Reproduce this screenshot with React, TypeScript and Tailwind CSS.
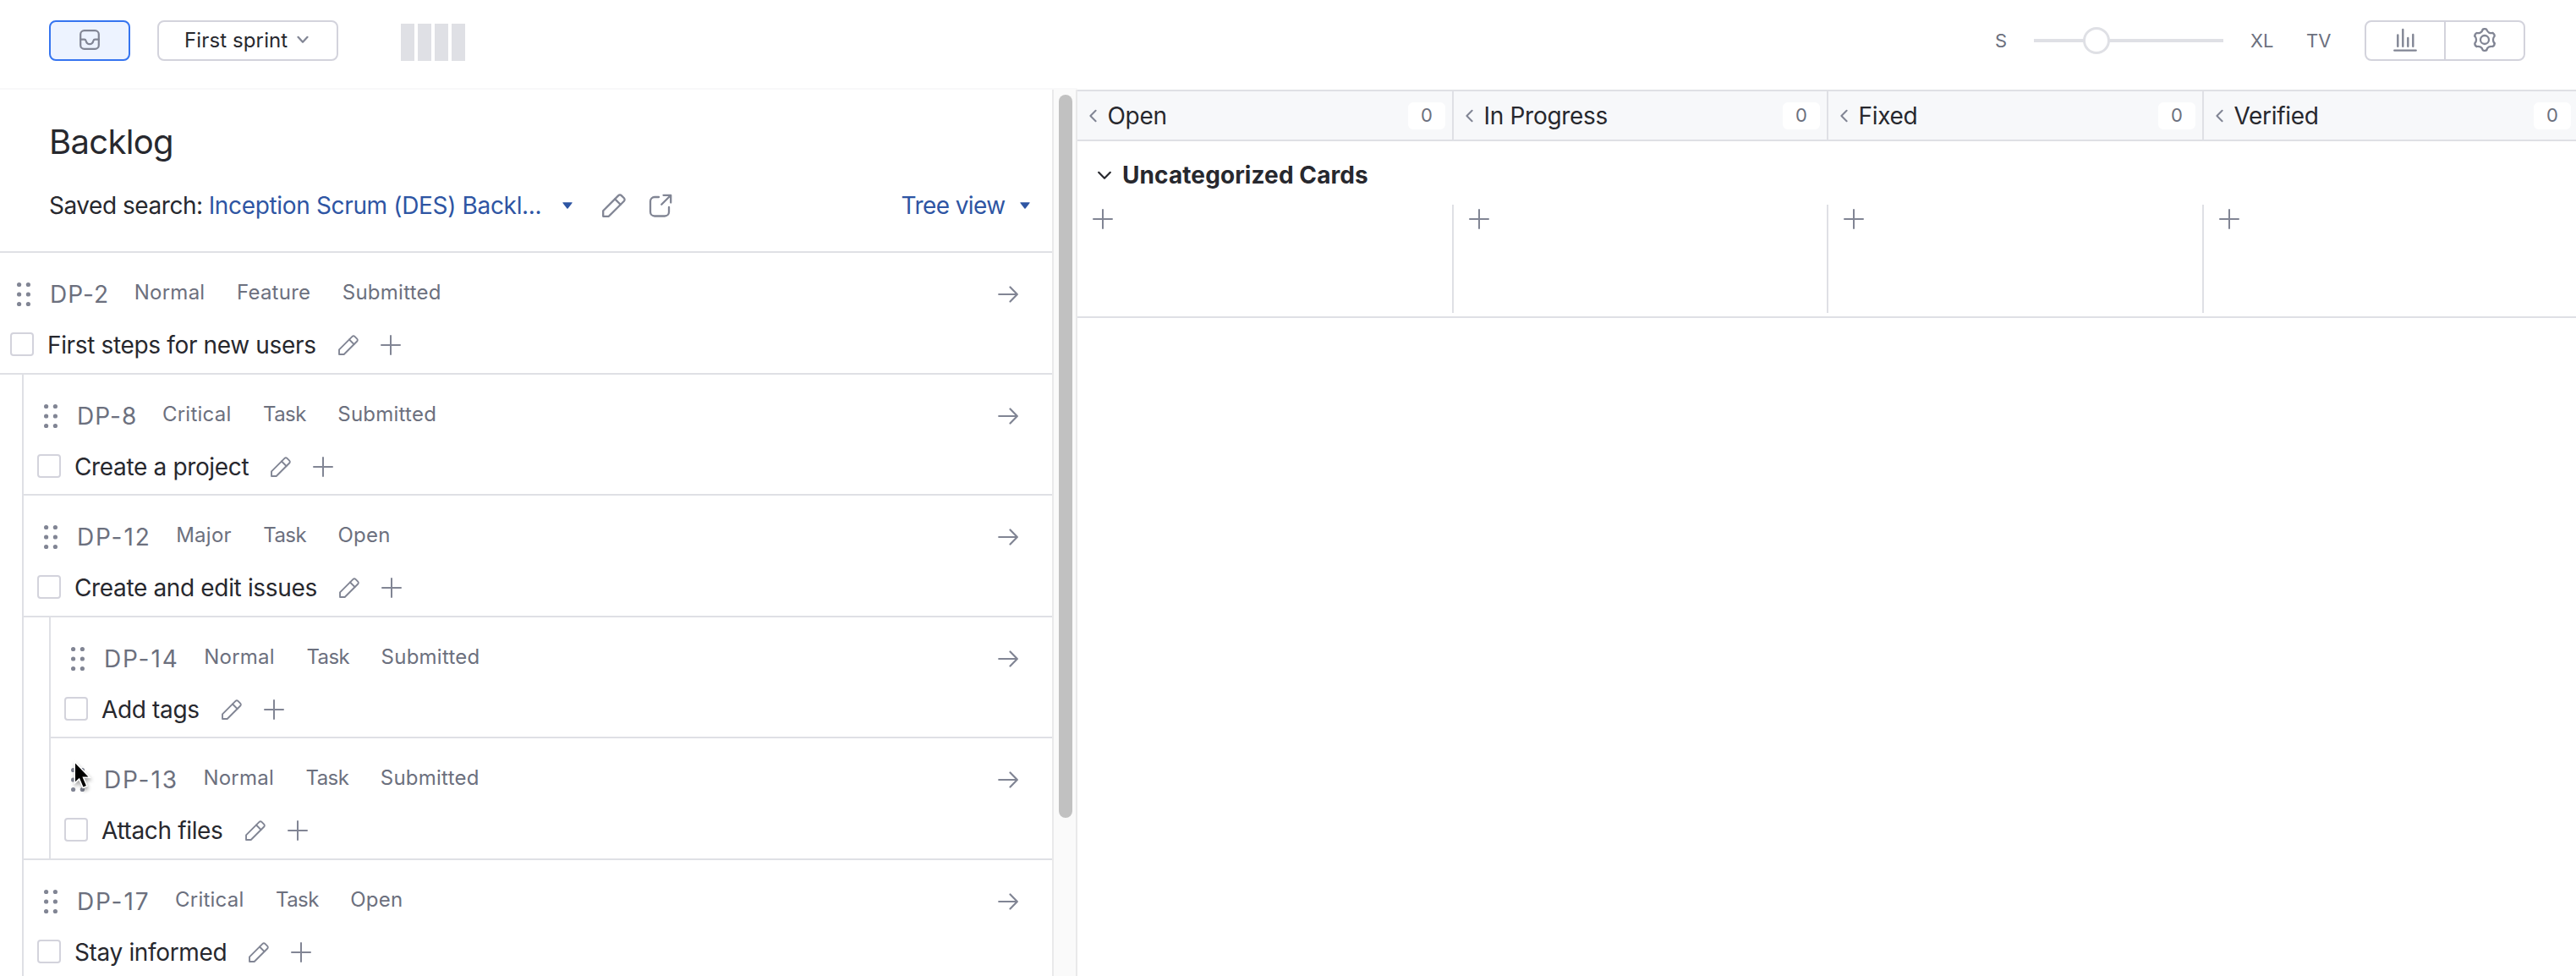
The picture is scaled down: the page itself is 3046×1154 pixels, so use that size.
import type { ReactNode } from "react";

interface Issue {
  id: string;
  fields: string[];
  title: string;
  height: string;
  hovered?: boolean;
  children?: Issue[];
}

const issues: Issue[] = [
  {
    id: "DP-2",
    fields: ["Normal", "Feature", "Submitted"],
    title: "First steps for new users",
    height: "h-[142px]",
    children: [
      {
        id: "DP-8",
        fields: ["Critical", "Task", "Submitted"],
        title: "Create a project",
        height: "h-[141px]",
      },
      {
        id: "DP-12",
        fields: ["Major", "Task", "Open"],
        title: "Create and edit issues",
        height: "h-[142px]",
        children: [
          {
            id: "DP-14",
            fields: ["Normal", "Task", "Submitted"],
            title: "Add tags",
            height: "h-[141px]",
          },
          {
            id: "DP-13",
            fields: ["Normal", "Task", "Submitted"],
            title: "Attach files",
            height: "h-[142px]",
            hovered: true,
          },
        ],
      },
      {
        id: "DP-17",
        fields: ["Critical", "Task", "Open"],
        title: "Stay informed",
        height: "h-[142px]",
      },
    ],
  },
];

const columns = ["Open", "In Progress", "Fixed", "Verified"];

interface IconProps {
  className?: string;
  box: string;
  strokeWidth?: number;
  children: ReactNode;
}

function Icon({ className, box, strokeWidth = 2, children }: IconProps) {
  return (
    <svg
      className={`shrink-0 ${className}`}
      viewBox={box}
      fill="none"
      stroke="currentColor"
      strokeWidth={strokeWidth}
      strokeLinecap="round"
      strokeLinejoin="round"
    >
      {children}
    </svg>
  );
}

function PencilIcon({ className, strokeWidth = 2.2 }: { className: string; strokeWidth?: number }) {
  return (
    <Icon className={className} box="0 0 28 28" strokeWidth={strokeWidth}>
      <path d="M1.2 26.8v-6.6L19.3 2.1a2.4 2.4 0 0 1 3.4 0l3.2 3.2a2.4 2.4 0 0 1 0 3.4L7.8 26.8z" />
      <path d="M15.2 6.4l6.4 6.4" />
    </Icon>
  );
}

function PlusIcon({ className = "" }: { className?: string }) {
  return (
    <Icon className={`w-6 h-6 text-[#818594] ${className}`} box="0 0 24 24">
      <path d="M12 1v22M1 12h22" />
    </Icon>
  );
}

function Caret({ className = "" }: { className?: string }) {
  return (
    <svg className={`w-3 h-2 shrink-0 ${className}`} viewBox="0 0 12 8" fill="currentColor">
      <path d="M.8.2h10.4a.5.5 0 0 1 .4.8L6.6 7.4a.8.8 0 0 1-1.2 0L.4 1a.5.5 0 0 1 .4-.8z" />
    </svg>
  );
}

function Grip() {
  return (
    <svg className="w-4 h-[34px] shrink-0 text-[#818594]" viewBox="0 0 16 34" fill="currentColor">
      {[5.5, 17, 28.5].map((y) => (
        <g key={y}>
          <circle cx="2.6" cy={y} r="2.6" />
          <circle cx="13.4" cy={y} r="2.6" />
        </g>
      ))}
    </svg>
  );
}

function GearIcon() {
  return (
    <Icon className="w-7 h-7 mb-0.5" box="-14 -14 28 28" strokeWidth={2.3}>
      {[0, 60, 120, 180, 240, 300].map((deg) => (
        <path
          key={deg}
          transform={`rotate(${deg})`}
          d="M-2.2-12.2Q0-13.6 2.2-12.2C3.1-9 6.3-7.2 9.45-8"
        />
      ))}
      <circle r="5" />
    </Icon>
  );
}

function Cursor() {
  return (
    <svg
      className="absolute left-[24px] top-[25px] w-7 h-10 drop-shadow-[1px_3px_2px_rgba(0,0,0,0.35)]"
      viewBox="0 0 28 40"
    >
      <path
        d="M5 4.5v21.8l4.9-4.5 4.6 10.6 3.4-1.5-4.5-10.3h7z"
        fill="#000"
        stroke="#fff"
        strokeWidth="3"
        paintOrder="stroke"
      />
    </svg>
  );
}

function Toolbar() {
  return (
    <header className="flex items-start h-[104px] pt-6 pl-[58px] pr-[60px] shrink-0">
      <button className="flex items-center justify-center w-24 h-12 rounded-lg border-2 border-[#3574f0] bg-[#edf3ff] text-[#818594]">
        <Icon className="w-6 h-6 mb-0.5" box="0 0 24 24" strokeWidth={2.2}>
          <rect x="1.2" y="1.2" width="21.6" height="21.6" rx="4.4" />
          <path d="M1.2 11.6h4.6c1 0 1.5.6 1.8 1.6.6 2.4 2 3.9 4.4 3.9s3.8-1.5 4.4-3.9c.3-1 .8-1.6 1.8-1.6h4.6" />
        </Icon>
      </button>

      <button className="flex items-center w-[214px] h-12 ml-8 pl-[30px] rounded-lg border-2 border-[#d3d3dc] text-2xl tracking-[0.12px]">
        First sprint
        <Icon className="w-[14px] h-2.5 ml-[11px] mb-0.5 text-[#818594]" box="0 0 14 10" strokeWidth={2.2}>
          <path d="M1.5 1.8L7 7.8l5.500-6" />
        </Icon>
      </button>

      <div className="flex gap-1 h-11 mt-1 ml-[74px]">
        {columns.map((c) => (
          <div key={c} className="w-4 bg-[#dfe0e5]" />
        ))}
      </div>

      <div className="flex items-center h-12 ml-auto text-[22px] text-[#6c707e]">
        <span className="w-[46px]">S</span>
        <div className="relative flex items-center w-56 h-8">
          <div className="w-full h-1 bg-[#dfe0e5]" />
          <div className="absolute left-[58px] top-0 w-8 h-8 rounded-full border-[3px] border-[#dfe0e5] bg-white" />
        </div>
        <span className="w-[66px] ml-8">XL</span>
        <span className="w-[69px]">TV</span>
        <div className="flex w-[190px] h-12 rounded-lg border-2 border-[#d3d3dc] text-[#818594]">
          <button className="flex items-center justify-center w-[94px] border-r-2 border-[#d3d3dc]">
            <Icon className="w-7 h-7 mb-0.5" box="0 0 28 28" strokeWidth={2.4}>
              <path d="M5.3 8.5v13.2M11.3 2v19.7M17.3 12v9.7M23.3 8v13.7M1.3 26.6h25.4" />
            </Icon>
          </button>
          <button className="flex items-center justify-center flex-1">
            <GearIcon />
          </button>
        </div>
      </div>
    </header>
  );
}

function IssueRow({ issue, root }: { issue: Issue; root: boolean }) {
  return (
    <div className={`relative pt-[29px] ${issue.height}`}>
      <div className={`flex items-center h-10 pr-10 text-[#6c707e] ${root ? "pl-5" : "pl-6"}`}>
        <Grip />
        <span
          className={`ml-[23px] text-[28px] ${
            issue.id.length > 4 ? "tracking-[1.9px]" : "tracking-[1.1px]"
          }`}
        >
          {issue.id}
        </span>
        <div className="flex gap-[37.5px] ml-[29.5px] mb-1 text-2xl">
          {issue.fields.map((f) => (
            <span key={f} className={f === "Task" ? "tracking-[-0.6px]" : "tracking-[0.25px]"}>
              {f}
            </span>
          ))}
        </div>
        <Icon className="w-6 h-5 ml-auto text-[#818594]" box="0 0 24 20" strokeWidth={2.2}>
          <path d="M1.2 10h21.4M14.5 1.5l8.300 8.500-8.300 8.500" />
        </Icon>
      </div>
      <div className={`flex items-center h-10 mt-5 ${root ? "pl-3" : "pl-4"}`}>
        <span className="w-7 h-7 mb-0.5 rounded-[4px] border-2 border-[#d3d3dc] bg-white shrink-0" />
        <span className="ml-4 text-[28px] tracking-[-0.35px]">{issue.title}</span>
        <PencilIcon className="w-6 h-6 ml-[26px] text-[#818594]" />
        <PlusIcon className="ml-[26px]" />
      </div>
      {issue.hovered && <Cursor />}
    </div>
  );
}

function IssueNode({ issue, depth }: { issue: Issue; depth: number }) {
  return (
    <>
      <IssueRow issue={issue} root={depth === 0} />
      {issue.children && (
        <div className="border-t-2 border-[#dfe0e5]">
          <div className={`border-l-2 border-[#dfe0e5] ${depth === 0 ? "ml-[26px]" : "ml-[30px]"}`}>
            {issue.children.map((child, i) => (
              <div key={child.id} className={i > 0 ? "border-t-2 border-[#dfe0e5]" : ""}>
                <IssueNode issue={child} depth={depth + 1} />
              </div>
            ))}
          </div>
        </div>
      )}
    </>
  );
}

function Backlog() {
  return (
    <section className="w-[1244px] shrink-0 overflow-hidden">
      <div className="h-[193px] pt-[38px] pl-[58px] pr-[26px] border-b-2 border-[#dfe0e5]">
        <h1 className="text-[40px] leading-[48px] tracking-[-0.7px]">Backlog</h1>
        <div className="flex items-center h-10 mt-[31px] text-[28px]">
          <span className="tracking-[-0.46px]">Saved search:</span>
          <span className="w-[418px] ml-[7px] tracking-[-0.34px] whitespace-nowrap text-[#2e55a3]">
            Inception Scrum (DES) Backl...
          </span>
          <Caret className="text-[#2e55a3]" />
          <PencilIcon className="w-7 h-7 ml-[35px] text-[#818594]" strokeWidth={2.3} />
          <Icon className="w-7 h-7 ml-[27px] text-[#818594]" box="0 0 28 28" strokeWidth={2.3}>
            <path d="M12 4H7a5 5 0 0 0-5 5v12.5a5 5 0 0 0 5 5h12a5 5 0 0 0 5-5V16" />
            <path d="M17.5 1.8h8.7v8.7M26 2L15.2 12.8" />
          </Icon>
          <span className="ml-auto tracking-[-0.6px] text-[#2e55a3]">Tree view</span>
          <Caret className="ml-[17.5px] text-[#2e55a3]" />
        </div>
      </div>
      {issues.map((issue) => (
        <IssueNode key={issue.id} issue={issue} depth={0} />
      ))}
    </section>
  );
}

function Board() {
  return (
    <section className="flex-1 min-w-0 overflow-hidden">
      <div className="w-[1776px]">
        <div className="grid grid-cols-[445px_443px_444px_444px] h-[61px] border-y-2 border-[#dfe0e5] bg-[#f7f8fa]">
          {columns.map((name) => (
            <div key={name} className="flex items-center pl-[14px] pr-2 border-r-2 border-[#dfe0e5]">
              <Icon className="w-[9px] h-4 text-[#818594]" box="0 0 9 16">
                <path d="M7.6 1.8L1.4 8l6.2 6.2" />
              </Icon>
              <span className="ml-[12.5px] text-[28px] tracking-[-0.3px]">{name}</span>
              <span className="flex items-center justify-center w-11 h-8 ml-auto rounded-md bg-white text-[22px] text-[#6c707e]">
                0
              </span>
            </div>
          ))}
        </div>

        <div className="border-b-2 border-[#dfe0e5] pb-1">
          <div className="flex items-center h-[75px] pl-6 pt-[5px]">
            <Icon className="w-4 h-[11px]" box="0 0 16 11" strokeWidth={2.2}>
              <path d="M1.2 1.8L8 8.800l6.800-7" />
            </Icon>
            <h2 className="ml-[13px] text-[28px] font-bold tracking-[0.09px]">Uncategorized Cards</h2>
          </div>
          <div className="grid grid-cols-[445px_443px_444px_444px] h-32">
            {columns.map((name) => (
              <div key={name} className="pt-[5px] pl-[17.5px] border-r-2 border-[#dfe0e5]">
                <PlusIcon />
              </div>
            ))}
          </div>
        </div>
      </div>
    </section>
  );
}

export default function App() {
  return (
    <div className="flex flex-col w-[3046px] h-[1154px] overflow-hidden bg-white font-[Inter,sans-serif] text-[#27282e]">
      <Toolbar />
      <div className="h-0.5 w-[1274px] shrink-0 bg-[#f8f8f9]" />
      <main className="flex flex-1 min-h-0">
        <Backlog />
        {/* Scrollbar */}
        <div className="w-[30px] shrink-0 pt-1.5 pl-1.5 border-x-2 border-[#e9e9ea] bg-[#fafafa]">
          <div className="w-4 h-[855px] rounded-full bg-[#c1c1c1]" />
        </div>
        <Board />
      </main>
    </div>
  );
}
